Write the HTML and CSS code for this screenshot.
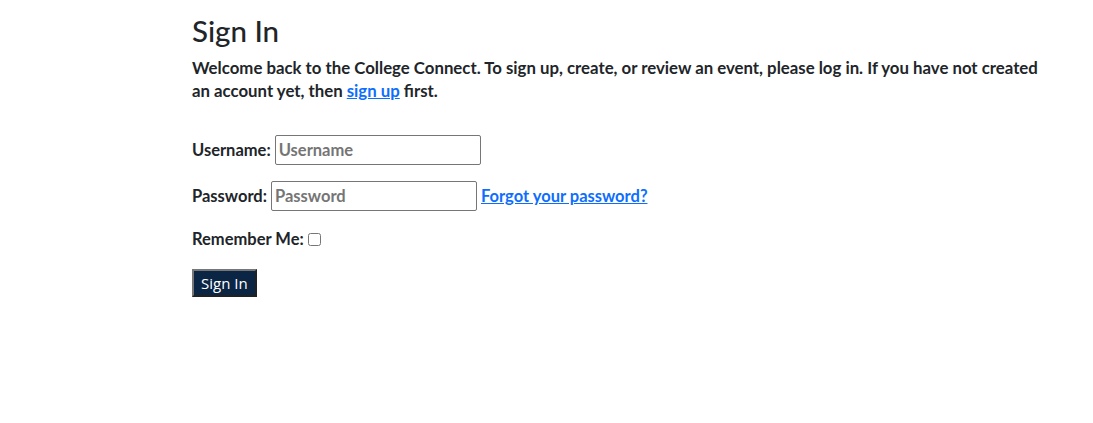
FILE: index.html
```html
<!DOCTYPE html>
<html lang="en">
<head>
<meta charset="utf-8">
<title>Sign In</title>
<link rel="stylesheet" href="styles.css">
</head>
<body>
<main class="page">
  <h1 class="title">Sign In</h1>
  <p class="intro">Welcome back to the College Connect. To sign up, create, or review an event, please log in. If you have not created an account yet, then <a href="#" class="link">sign up</a> first.</p>
  <form class="form">
    <div class="row row-field">
      <label for="u" class="label">Username:</label>
      <input id="u" class="field field-user" type="text" placeholder="Username">
    </div>
    <div class="row row-field">
      <label for="p" class="label">Password:</label>
      <input id="p" class="field field-pass" type="password" placeholder="Password">
      <a href="#" class="link">Forgot your password?</a>
    </div>
    <div class="row row-check">
      <label for="r" class="label">Remember Me:</label>
      <input id="r" class="check" type="checkbox">
    </div>
    <div class="row row-btn">
      <button type="button" class="btn">Sign In</button>
    </div>
  </form>
</main>
</body>
</html>
```
FILE: styles.css
```css
html, body {
  margin: 0;
  padding: 0;
  background: #ffffff;
}
body {
  font-family: "Lato", "Noto Sans", sans-serif;
  color: #212529;
}
.page {
  padding: 14px 0 0 192px;
  max-width: 860px;
}
.title {
  font-size: 29.5px;
  font-weight: 500;
  line-height: 34px;
  margin: 0 0 8px 0;
}
.intro {
  font-size: 16.8px;
  font-weight: 700;
  line-height: 23px;
  margin: 0 0 33px 0;
}
.link {
  color: #0d6efd;
  text-decoration: underline;
  font-weight: 700;
}
.form {
  display: flex;
  flex-direction: column;
  gap: 16px;
}
.row {
  display: flex;
  align-items: center;
  gap: 4px;
  font-size: 16.5px;
  font-weight: 700;
}
.row-field {
  min-height: 30px;
}
.row-check {
  min-height: 24px;
}
.row-btn {
  margin-top: 2px;
}
.field {
  height: 30px;
  box-sizing: border-box;
  border: 1px solid #767676;
  border-radius: 2px;
  padding: 1px 3px;
  font-family: inherit;
  font-size: 16.5px;
  font-weight: 700;
  width: 206px;
  color: #212529;
}
.field::placeholder {
  color: #757575;
}
.check {
  margin: 0;
  width: 13px;
  height: 13px;
}
.btn {
  font-family: "Open Sans", "Noto Sans", sans-serif;
  font-size: 15px;
  background: #0b2545;
  color: #ffffff;
  border: 2px outset #767676;
  padding: 2px 7px;
  height: 28px;
  line-height: 20px;
}
```
